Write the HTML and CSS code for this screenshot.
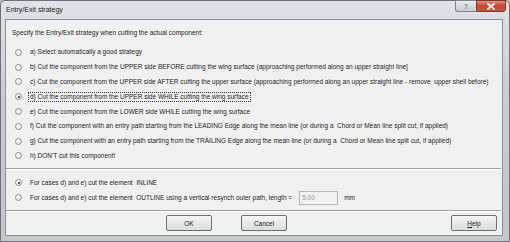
FILE: index.html
```html
<!DOCTYPE html>
<html lang="en">
<head>
    <meta charset="UTF-8">
    <title>Entry/Exit strategy</title>
    <link rel="stylesheet" href="styles.css">
</head>
<body>
    <div class="window">
        <div class="titlebar">
            <span class="title">Entry/Exit strategy</span>
            <div class="caption-buttons">
                <span class="cap-help">?</span>
                <span class="cap-close">
                    <svg width="10" height="7" viewBox="0 0 10 7">
                        <path d="M1.5 0.5 L8.5 6.5 M8.5 0.5 L1.5 6.5" stroke="#fff" stroke-width="1.8" fill="none"/>
                    </svg>
                </span>
            </div>
        </div>
        <div class="client">
            <div class="intro">Specify the Entry/Exit strategy when cutting the actual component:</div>
            <div class="options">
                <div class="option"><span class="radio"></span><span class="label">a) Select automatically a good strategy</span></div>
                <div class="option"><span class="radio"></span><span class="label">b) Cut the component from the UPPER side BEFORE cutting the wing surface (approaching performed along an upper straight line]</span></div>
                <div class="option"><span class="radio"></span><span class="label">c) Cut the component from the UPPER side AFTER cutting the upper surface (approaching performed along an upper straight line - remove&nbsp; upper shell before)</span></div>
                <div class="option"><span class="radio checked"></span><span class="label focused">d) Cut the component from the UPPER side WHILE cutting the wing surface</span></div>
                <div class="option"><span class="radio"></span><span class="label">e) Cut the component from the LOWER side WHILE cutting the wing surface</span></div>
                <div class="option"><span class="radio"></span><span class="label">f) Cut the component with an entry path starting from the LEADING Edge along the mean line (or during a&nbsp; Chord or Mean line split cut, if applied)</span></div>
                <div class="option"><span class="radio"></span><span class="label">g) Cut the component with an entry path starting from the TRAILING Edge along the mean line (or during a&nbsp; Chord or Mean line split cut, if applied)</span></div>
                <div class="option"><span class="radio"></span><span class="label">h) DON'T cut this component!</span></div>
            </div>
            <div class="separator"></div>
            <div class="options cut-mode">
                <div class="option"><span class="radio checked"></span><span class="label">For cases d) and e) cut the element&nbsp; INLINE</span></div>
                <div class="option"><span class="radio"></span><span class="label">For cases d) and e) cut the element&nbsp; OUTLINE using a vertical resynch outer path, length =</span><span class="length-box">5.00</span><span class="unit">mm</span></div>
            </div>
            <div class="separator"></div>
            <div class="button-row">
                <button class="btn btn-ok">OK</button>
                <button class="btn btn-cancel">Cancel</button>
                <button class="btn btn-help"><u>H</u>elp</button>
            </div>
        </div>
    </div>
</body>
</html>
```

FILE: styles.css
```css
body {
    margin: 0;
    background: #b9bcc0;
    font-family: "Liberation Sans", Arial, sans-serif;
}
.window {
    width: 510px;
    height: 242px;
    box-sizing: border-box;
    border: 1px solid #6f7379;
    border-radius: 5px 5px 0 0;
    background: linear-gradient(to bottom, #dfe2e6, #c9cdd2 40%, #c4c8cd);
    display: flex;
    flex-direction: column;
}
.titlebar {
    height: 17px;
    display: flex;
    align-items: flex-start;
    justify-content: space-between;
    padding-left: 5px;
}
.title {
    font-size: 7px;
    color: #1c1c1c;
    line-height: 17px;
}
.caption-buttons {
    display: flex;
    margin-right: 3px;
    margin-top: -1px;
}
.cap-help {
    width: 21px;
    height: 12px;
    box-sizing: border-box;
    border: 1px solid #7f858d;
    border-right: none;
    border-radius: 0 0 0 3px;
    background: linear-gradient(to bottom, #e9ebee, #c8ccd1);
    font-size: 7px;
    color: #4a4f55;
    text-align: center;
    line-height: 11px;
}
.cap-close {
    width: 30px;
    height: 12px;
    box-sizing: border-box;
    border: 1px solid #7a3a30;
    border-radius: 0 0 3px 0;
    background: linear-gradient(to bottom, #e3907f, #c9462f 50%, #d2533a);
    display: flex;
    align-items: center;
    justify-content: center;
}
.client {
    margin: 1px 6px 5px 4px;
    flex: 1;
    background: #f0f0f0;
    border: 1px solid #8c9096;
    font-size: 6.5px;
    color: #1e1e1e;
}
.intro {
    padding: 8px 0 0 6px;
    line-height: 10px;
}
.options {
    margin-top: 7px;
}
.option {
    height: 14.8px;
    display: flex;
    align-items: center;
    padding-left: 9px;
    white-space: nowrap;
}
.radio {
    width: 7px;
    height: 7px;
    box-sizing: border-box;
    border-radius: 50%;
    border: 1px solid #8e8f8f;
    background: radial-gradient(circle at 40% 40%, #ffffff, #e2e3e4);
    margin-right: 6px;
    position: relative;
    flex-shrink: 0;
}
.radio.checked::after {
    content: "";
    position: absolute;
    left: 1.5px;
    top: 1.5px;
    width: 2px;
    height: 2px;
    border-radius: 50%;
    background: #2a2a2a;
}
.label {
    line-height: 8px;
    padding: 0 1px;
    border: 1px solid transparent;
}
.label.focused {
    border: 1px dotted #333;
}
.separator {
    margin: 5px 1px 0 0;
    border-top: 1px solid #a0a0a0;
    border-bottom: 1px solid #ffffff;
}
.cut-mode {
    margin-top: 5px;
    margin-bottom: 3px;
}
.cut-mode .option {
    height: 15px;
}
.length-box {
    width: 39px;
    height: 14px;
    box-sizing: border-box;
    border: 1px solid #b5b5b5;
    background: #f0f0f0;
    color: #9a9a9a;
    line-height: 12px;
    padding-left: 2px;
    margin-left: 5px;
}
.unit {
    margin-left: 6px;
}
.button-row {
    display: flex;
    margin-top: 3px;
    padding-right: 5px;
}
.btn {
    width: 46px;
    height: 16px;
    box-sizing: border-box;
    border: 1px solid #707070;
    border-radius: 2px;
    background: linear-gradient(to bottom, #f6f6f6, #e8e8e8 50%, #dcdcdc);
    font-family: "Liberation Sans", Arial, sans-serif;
    font-size: 6.5px;
    color: #1e1e1e;
    padding: 0;
}
.btn-ok {
    margin-left: 160px;
}
.btn-cancel {
    margin-left: 29px;
}
.btn-help {
    margin-left: auto;
}
```
